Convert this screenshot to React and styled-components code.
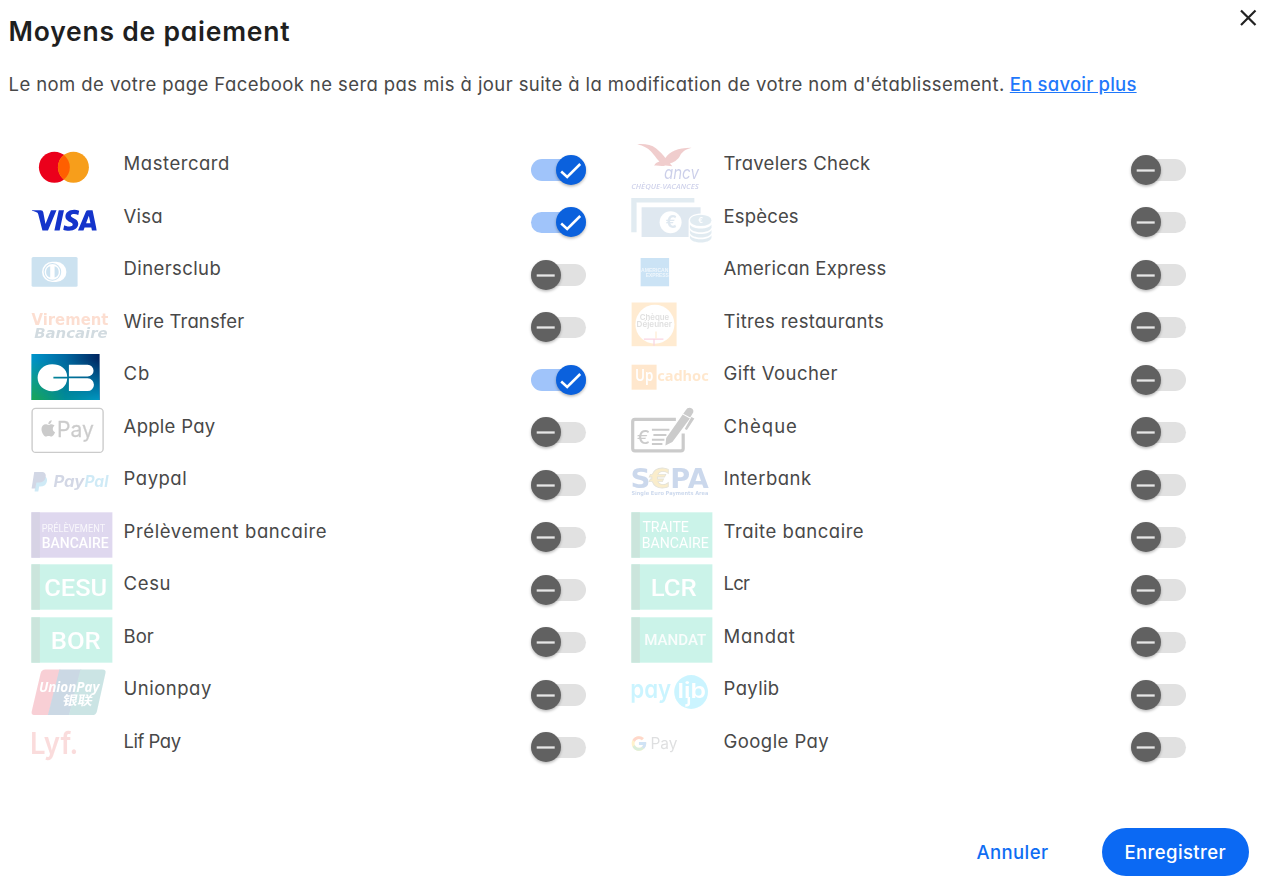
import React from 'react';
import styled, { createGlobalStyle, css } from 'styled-components';
import { SiVisa } from 'react-icons/si';
import { FaApple } from 'react-icons/fa';
import { FcGoogle } from 'react-icons/fc';

const GlobalStyle = createGlobalStyle`
  *, *::before, *::after { box-sizing: border-box; }
  body {
    margin: 0;
    background: #fff;
    font-family: Inter, "Liberation Sans", sans-serif;
    font-feature-settings: "cv11" 1;
    color: #484848;
  }
`;

const Dialog = styled.main`
  width: 1262px;
  height: 885px;
  display: flex;
  flex-direction: column;
  background: #fff;
  overflow: hidden;
`;

const Header = styled.header`
  display: flex;
  justify-content: space-between;
  align-items: flex-start;
  height: 68px;
  padding: 8px 4px 0 8.5px;
`;

const Title = styled.h1`
  margin: 7px 0 0;
  font-size: 26.5px;
  line-height: 32px;
  font-weight: 600;
  letter-spacing: 0.77px;
  color: #1f1f1f;
  white-space: nowrap;
`;

const CloseButton = styled.button`
  display: flex;
  padding: 0;
  border: 0;
  background: none;
  color: #222;
`;

const Intro = styled.p`
  margin: 0;
  height: 73px;
  padding-left: 8.5px;
  font-size: 18.5px;
  line-height: 33px;
  letter-spacing: 0.42px;
  white-space: nowrap;
`;

const MoreLink = styled.a`
  margin-left: -0.5px;
  color: #1f78fb;
  font-weight: 500;
  letter-spacing: 0.2px;
  text-decoration: underline;
`;

const Columns = styled.div`
  display: grid;
  grid-template-columns: 600px 600px;
  padding-top: 3.3px;
`;

const Column = styled.div`
  display: flex;
  flex-direction: column;
`;

const Row = styled.div`
  display: flex;
  align-items: flex-start;
  height: 52.5px;
  padding-left: 31.3px;
`;

const Logo = styled.svg`
  flex: none;
  width: 81px;
  height: 46px;
  overflow: visible;
  opacity: ${(p) => (p.$on ? 1 : 0.2)};
`;

const Label = styled.span`
  flex: none;
  width: 407.7px;
  margin: 7.2px 0 0 11.3px;
  font-size: 18.5px;
  line-height: 24px;
  letter-spacing: ${(p) => p.$track}px;
  white-space: nowrap;
`;

const Track = styled.span`
  display: flex;
  align-items: center;
  width: 54.5px;
  height: 21.5px;
  margin-top: 14.8px;
  border-radius: 11px;
  background: #e1e1e1;
  ${(p) => p.$on && css`
    justify-content: flex-end;
    background: #a0c4fa;
  `}
`;

const Knob = styled.span`
  flex: none;
  display: flex;
  width: 30px;
  height: 30px;
  border-radius: 50%;
  background: ${(p) => (p.$on ? '#0b61dd' : '#616161')};
  box-shadow: 0 1.5px 3px rgba(0, 0, 0, 0.28);
`;

const Footer = styled.footer`
  display: flex;
  justify-content: flex-end;
  margin: auto 13.5px 9px 0;
  gap: 32px;
`;

const Button = styled.button`
  height: 48px;
  width: ${(p) => (p.$primary ? 146.5 : 115)}px;
  padding: 1px 0 0;
  border: 0;
  border-radius: 24px;
  font: 500 18.5px/47px Inter, sans-serif;
  font-feature-settings: inherit;
  letter-spacing: 0.4px;
  color: ${(p) => (p.$primary ? '#fff' : '#0f6df3')};
  background: ${(p) => (p.$primary ? '#0b69f3' : 'transparent')};
`;

const PlainText = styled.g`
  font-feature-settings: normal;
`;

const Word = ({ x, y, w, size, children, ...rest }) => (
  <text x={x} y={y} textLength={w} lengthAdjust="spacingAndGlyphs" fontSize={size} {...rest}>
    {children}
  </text>
);

const Plate = ({ base = '#00c896', edge = '#008255', children }) => (
  <g fill="#fff" fontFamily="Roboto, sans-serif" fontWeight="500">
    <rect y="0.3" width="81" height="45.4" fill={base} />
    <rect y="0.3" width="8.5" height="45.4" fill={edge} />
    {children}
  </g>
);

const logos = {
  mastercard: (
    <>
      <circle cx="23" cy="23.2" r="15.5" fill="#eb001b" />
      <circle cx="42" cy="23.2" r="15.5" fill="#f79e1b" />
      <path d="M32.5 11a15.5 15.5 0 0 1 0 24.4a15.5 15.5 0 0 1 0 -24.4z" fill="#ff5f00" />
    </>
  ),
  visa: <SiVisa x="0.4" y="-9.2" size={65} color="#1434cb" />,
  diners: (
    <>
      <rect x="0.2" y="8" width="46" height="29.7" rx="1.5" fill="#0573b9" />
      <path d="M20.8 12.7h4a10.2 10.2 0 0 1 0 20.4h-4a10.2 10.2 0 0 1 0-20.4z" fill="#fff" />
      <circle cx="21" cy="22.9" r="8.8" fill="#0573b9" />
      <circle cx="21" cy="22.9" r="7.8" fill="#fff" />
      <path d="M18.8 17.2a6 6 0 0 0 0 11.4zM23.2 17.2a6 6 0 0 1 0 11.4z" fill="#0573b9" />
    </>
  ),
  wire: (
    <g fontFamily="DejaVu Sans, sans-serif" fontWeight="700">
      <Word x="0" y="22.5" w="77" size="15.8" fill="#f55f1e">Virement</Word>
      <Word x="2.8" y="35.5" w="73.5" size="14.8" fontStyle="italic" fill="#235069">Bancaire</Word>
    </g>
  ),
  cb: (
    <>
      <defs>
        <linearGradient id="cbTop" x1="0" y1="0" x2="1" y2="0">
          <stop offset="0" stopColor="#0095ca" />
          <stop offset="0.5" stopColor="#0067a0" />
          <stop offset="1" stopColor="#00245f" />
        </linearGradient>
        <linearGradient id="cbBottom" x1="0" y1="0" x2="1" y2="0">
          <stop offset="0" stopColor="#1ba850" />
          <stop offset="0.5" stopColor="#008d98" />
          <stop offset="1" stopColor="#009ac6" />
        </linearGradient>
        <linearGradient id="cbFade" x1="0" y1="0" x2="0" y2="1">
          <stop offset="0.1" stopColor="#000" />
          <stop offset="1" stopColor="#fff" />
        </linearGradient>
        <mask id="cbMask"><rect width="69" height="47" fill="url(#cbFade)" /></mask>
      </defs>
      <rect width="68.2" height="46" fill="url(#cbTop)" />
      <rect width="68.2" height="46" fill="url(#cbBottom)" mask="url(#cbMask)" />
      <path d="M20.8 10.2c8.2 0 14.8 4.2 15 12.5H22v1.7h13.8c-.4 8-6.8 12.8-15 12.8c-8.4 0-14.6-6-14.6-13.4s6.2-13.6 14.6-13.6z" fill="#fff" />
      <path d="M37.5 10.7h18.7a5.9 5.9 0 0 1 0 11.9h-18.7zM37.5 24.3h18.7a6.3 6.3 0 0 1 0 12.7h-18.7z" fill="#fff" />
    </>
  ),
  apple: (
    <PlainText>
      <rect x="0.7" y="1.4" width="71" height="44" rx="3.5" fill="none" stroke="#000" strokeWidth="1.4" />
      <FaApple x="7.6" y="12.2" size={18.5} color="#000" />
      <Word x="25.6" y="29.9" w="37" size="21.5" stroke="#000" strokeWidth="0.3">Pay</Word>
    </PlainText>
  ),
  paypal: (
    <>
      <path d="M5 17h7c3 .5 4.3 3 3.4 6c-.8 3.2-3.2 4.5-6.4 4.5h-1.2l-.9 4.9H3.2z" fill="#179bd7" />
      <path d="M2.8 13h7.2c3.5 0 5 2 4.2 5.4c-.8 3.4-3 5-6.7 5H5l-1 6.1H0.2z" fill="#253b80" />
      <g fontWeight="700" fontStyle="italic">
        <Word x="22" y="28.4" w="31" size="15.5" fill="#253b80">Pay</Word>
        <Word x="53" y="28.4" w="24" size="15.5" fill="#179bd7">Pal</Word>
      </g>
    </>
  ),
  prelevement: (
    <Plate base="#6441b4" edge="#3c2882">
      <Word x="10.3" y="19.9" w="63.5" size="10" fillOpacity="0.8" fontWeight="400">PRÉLÈVEMENT</Word>
      <Word x="10.3" y="35.5" w="67" size="13.8">BANCAIRE</Word>
    </Plate>
  ),
  cesu: <Plate><Word x="12.8" y="31.7" w="63" size="24">CESU</Word></Plate>,
  bor: <Plate><Word x="19.3" y="31.9" w="50" size="23.5">BOR</Word></Plate>,
  unionpay: (
    <>
      <path d="M14 .4H29L17 46H3.5Q-.6 46 .4 42L9.3 4Q10.2 .4 14 .4z" fill="#e11432" />
      <path d="M28 .4H50L38 46H16.5z" fill="#00417d" />
      <path d="M49 .4H71Q75 .4 74.1 4L65.5 42.4Q64.6 46 61 46H37.5z" fill="#007d7d" />
      <g fill="#fff" fontWeight="700" fontStyle="italic">
        <Word x="7.5" y="22.8" w="60.5" size="13.5" fontFamily="Open Sans, sans-serif">UnionPay</Word>
        <g transform="skewX(-10)">
          <Word x="37" y="35.8" w="30" size="13" fontStyle="normal" fontFamily="Noto Sans CJK SC, sans-serif">银联</Word>
        </g>
      </g>
    </>
  ),
  lyf: <Word x="-1.5" y="31.5" w="48.5" size="30.5" fontWeight="600" fill="#eb5555">Lyf.</Word>,
  ancv: (
    <>
      <path d="M5.8 .2C13 -.4 20 .5 24.5 4.2C28.5 7.5 31.5 10.5 34 14C38 7.5 47 3.5 60.2 3.7C53.5 5.5 50.5 8 48.5 12C46.5 16 42 18.5 38.5 19.5L41 22.3L34 21.5C30 23 26 21 22.8 21.8C23.5 19.5 25.5 18.3 28 17.5C21.5 10.5 19 3 5.8 .2z" fill="#b90a0a" />
      <g fontStyle="italic" fill="#001496">
        <Word x="32.5" y="34.7" w="35" size="17.5">ancv</Word>
        <Word x="-.2" y="45" w="67.5" size="7" fontWeight="600" fontFamily="Open Sans, sans-serif">CHÈQUE-VACANCES</Word>
      </g>
    </>
  ),
  cash: (
    <>
      <path d="M-.2 .9h63.2v4.7H5.2v29.7H-.2z" fill="#6ea0be" />
      <path d="M10.2 10.2h59v6.3c-7 .3-12 3-12 7.5v15.9h-47z" fill="#6491b9" />
      <circle cx="39.2" cy="25.2" r="11" fill="#fff" />
      <text x="34" y="31.2" fontSize="17" fontWeight="700" fill="#6491b9">€</text>
      <g fill="#6ea0be">
        <ellipse cx="69.3" cy="23.4" rx="10.8" ry="5.7" />
        <path d="M58.5 27.5c3 5.4 18.6 5.4 21.6 0v3.3c-2 6-19.6 6-21.6 0zM58.5 33c3 5.4 18.6 5.4 21.6 0v3c-2 6-19.6 6-21.6 0zM58.5 38.3c3 5.4 18.6 5.4 21.6 0v2.7c-2 6-19.6 6-21.6 0z" />
      </g>
      <text x="66.8" y="25.9" fontSize="7" fontWeight="700" fill="#fff">€</text>
    </>
  ),
  amex: (
    <>
      <rect x="9.2" y="9" width="28.5" height="28.3" fill="#0078d2" />
      <g fill="#fff" fillOpacity="0.7" fontWeight="700" fontFamily="Liberation Sans, sans-serif">
        <Word x="9.6" y="22.6" w="27.5" size="5.4">AMERICAN</Word>
        <Word x="14.3" y="28.4" w="23.2" size="5.4">EXPRESS</Word>
      </g>
    </>
  ),
  restaurant: (
    <>
      <rect x="0.2" y="0.5" width="45" height="43.7" fill="#ffa01e" />
      <circle cx="23.5" cy="22.3" r="19.5" fill="#fff" />
      <g fill="#646464" fontWeight="600">
        <Word x="8.3" y="17.6" w="29.5" size="8">Chèque</Word>
        <Word x="5.2" y="24.8" w="35.5" size="8">Déjeuner</Word>
      </g>
      <path d="M12.5 37.2h19.5M22.6 37.2v6.5" stroke="#e6286e" strokeWidth="1.2" fill="none" />
      <path d="M24.6 29.5v7" stroke="#ffa01e" strokeWidth="1.2" />
    </>
  ),
  cadhoc: (
    <g fontWeight="700" fontFamily="Noto Sans, sans-serif">
      <rect x="0.2" y="10.7" width="25" height="25" fill="#ff8c0a" />
      <Word x="3.5" y="27.4" w="18.5" size="15.5" fill="#fff" fontWeight="600">Up</Word>
      <Word x="25.8" y="27.4" w="51.5" size="14.5" fill="#ff8c0a">cadhoc</Word>
    </g>
  ),
  cheque: (
    <>
      <path d="M44.5 12.3H3.5Q1.3 12.3 1.3 14.5V41.5Q1.3 43.9 3.5 43.9H49.5Q51.8 43.9 51.8 41.5V26.5" fill="none" stroke="#000" strokeWidth="3.2" />
      <path d="M54.3 3.2Q56 .3 59.5 1Q62.7 2 61.8 5.5L58.8 10.6L51.8 6.8zM51.3 7.5L58.5 11.5L41 35L34 38.5L34.8 31zM60 10L63 11.5L55.5 23L53.3 22z" fill="#000" />
      <path d="M20.5 22.8H38M22 28H35M20.5 32.8H33M20.5 37H31" stroke="#000" strokeWidth="2" />
      <Word x="5.3" y="36.5" w="13.5" size="18.5" fontWeight="500">€</Word>
    </>
  ),
  sepa: (
    <g fontFamily="DejaVu Sans, sans-serif" fontWeight="700" fill="#0041a5">
      <Word x="-1" y="28.9" w="20" size="26.5">S</Word>
      <Word x="38.8" y="28.9" w="38.5" size="26.5">PA</Word>
      <Word x="18.3" y="28.9" w="20.5" size="26.5" stroke="#7c7440" strokeWidth="0.8" fill="#ebaa00">€</Word>
      <Word x="0" y="35.8" w="77" size="5.5">Single Euro Payments Area</Word>
    </g>
  ),
  traite: (
    <Plate>
      <Word x="11" y="19.9" w="46.5" size="13.8" fontWeight="400">TRAITE</Word>
      <Word x="10.3" y="35.5" w="67" size="13.8" fontWeight="400">BANCAIRE</Word>
    </Plate>
  ),
  lcr: <Plate><Word x="19.3" y="31.7" w="46" size="24">LCR</Word></Plate>,
  mandat: <Plate><Word x="12.8" y="27.9" w="62" size="15" fillOpacity="0.9">MANDAT</Word></Plate>,
  paylib: (
    <g fontWeight="600">
      <Word x="-1.2" y="28.8" w="41" size="25" fill="#00cdff">pay</Word>
      <circle cx="59.7" cy="23" r="16.9" fill="#00cdff" />
      <Word x="46" y="28.8" w="28.5" size="20.5" fill="#fff">lib</Word>
      <path d="M57.4 28v6.5q0 2 -3.5 2" fill="none" stroke="#fff" strokeWidth="2.5" />
    </g>
  ),
  google: (
    <PlainText>
      <FcGoogle x="-1.2" y="12.7" size={17.5} />
      <Word x="19" y="27.2" w="27" size="15.8" fill="#5f6368">Pay</Word>
    </PlainText>
  ),
};

const left = [
  ['mastercard', 'Mastercard', 0.53, true],
  ['visa', 'Visa', 0.2, true],
  ['diners', 'Dinersclub', 0.4],
  ['wire', 'Wire Transfer', 0.13],
  ['cb', 'Cb', 0.8, true],
  ['apple', 'Apple Pay', 0.28],
  ['paypal', 'Paypal', 0.5],
  ['prelevement', 'Prélèvement bancaire', 0.6],
  ['cesu', 'Cesu', 0.65],
  ['bor', 'Bor', 0],
  ['unionpay', 'Unionpay', 0.5],
  ['lyf', 'Lif Pay', -0.5],
];

const right = [
  ['ancv', 'Travelers Check', 0.27],
  ['cash', 'Espèces', 0.15],
  ['amex', 'American Express', 0.25],
  ['restaurant', 'Titres restaurants', 0.31],
  ['cadhoc', 'Gift Voucher', 0.46],
  ['cheque', 'Chèque', 1],
  ['sepa', 'Interbank', 0.5],
  ['traite', 'Traite bancaire', 0.53],
  ['lcr', 'Lcr', -0.8],
  ['mandat', 'Mandat', 0.7],
  ['paylib', 'Paylib', 0.35],
  ['google', 'Google Pay', 0.43],
];

const Toggle = ({ on }) => (
  <Track $on={on}>
    <Knob $on={on}>
      <svg width="30" height="30" fill="none" stroke="#fff">
        {on ? <path d="M5.2 16.5l6 5.5L24.2 9" strokeWidth="2.5" /> : <path d="M5.7 15.5h18" stroke="#e6e6e6" strokeWidth="2.3" />}
      </svg>
    </Knob>
  </Track>
);

const Methods = ({ items }) => (
  <Column>
    {items.map(([logo, name, track, on]) => (
      <Row key={name}>
        <Logo viewBox="-0.4 0 81 46" $on={on}>{logos[logo]}</Logo>
        <Label $track={track}>{name}</Label>
        <Toggle on={on} />
      </Row>
    ))}
  </Column>
);

export default function App() {
  return (
    <>
      <GlobalStyle />
      <Dialog>
        <Header>
          <Title>Moyens de paiement</Title>
          <CloseButton aria-label="Fermer">
            <svg width="20" height="20" viewBox="0 0 20 20" fill="none" stroke="currentColor" strokeWidth="2.2"><path d="M3 2.5l14.5 14.5M17.5 2.5L3 17" /></svg>
          </CloseButton>
        </Header>
        <Intro>
          Le nom de votre page Facebook ne sera pas mis à jour suite à la modification de votre nom d'établissement.{' '}
          <MoreLink>En savoir plus</MoreLink>
        </Intro>
        <Columns>
          <Methods items={left} />
          <Methods items={right} />
        </Columns>
        <Footer>
          <Button>Annuler</Button>
          <Button $primary>Enregistrer</Button>
        </Footer>
      </Dialog>
    </>
  );
}
